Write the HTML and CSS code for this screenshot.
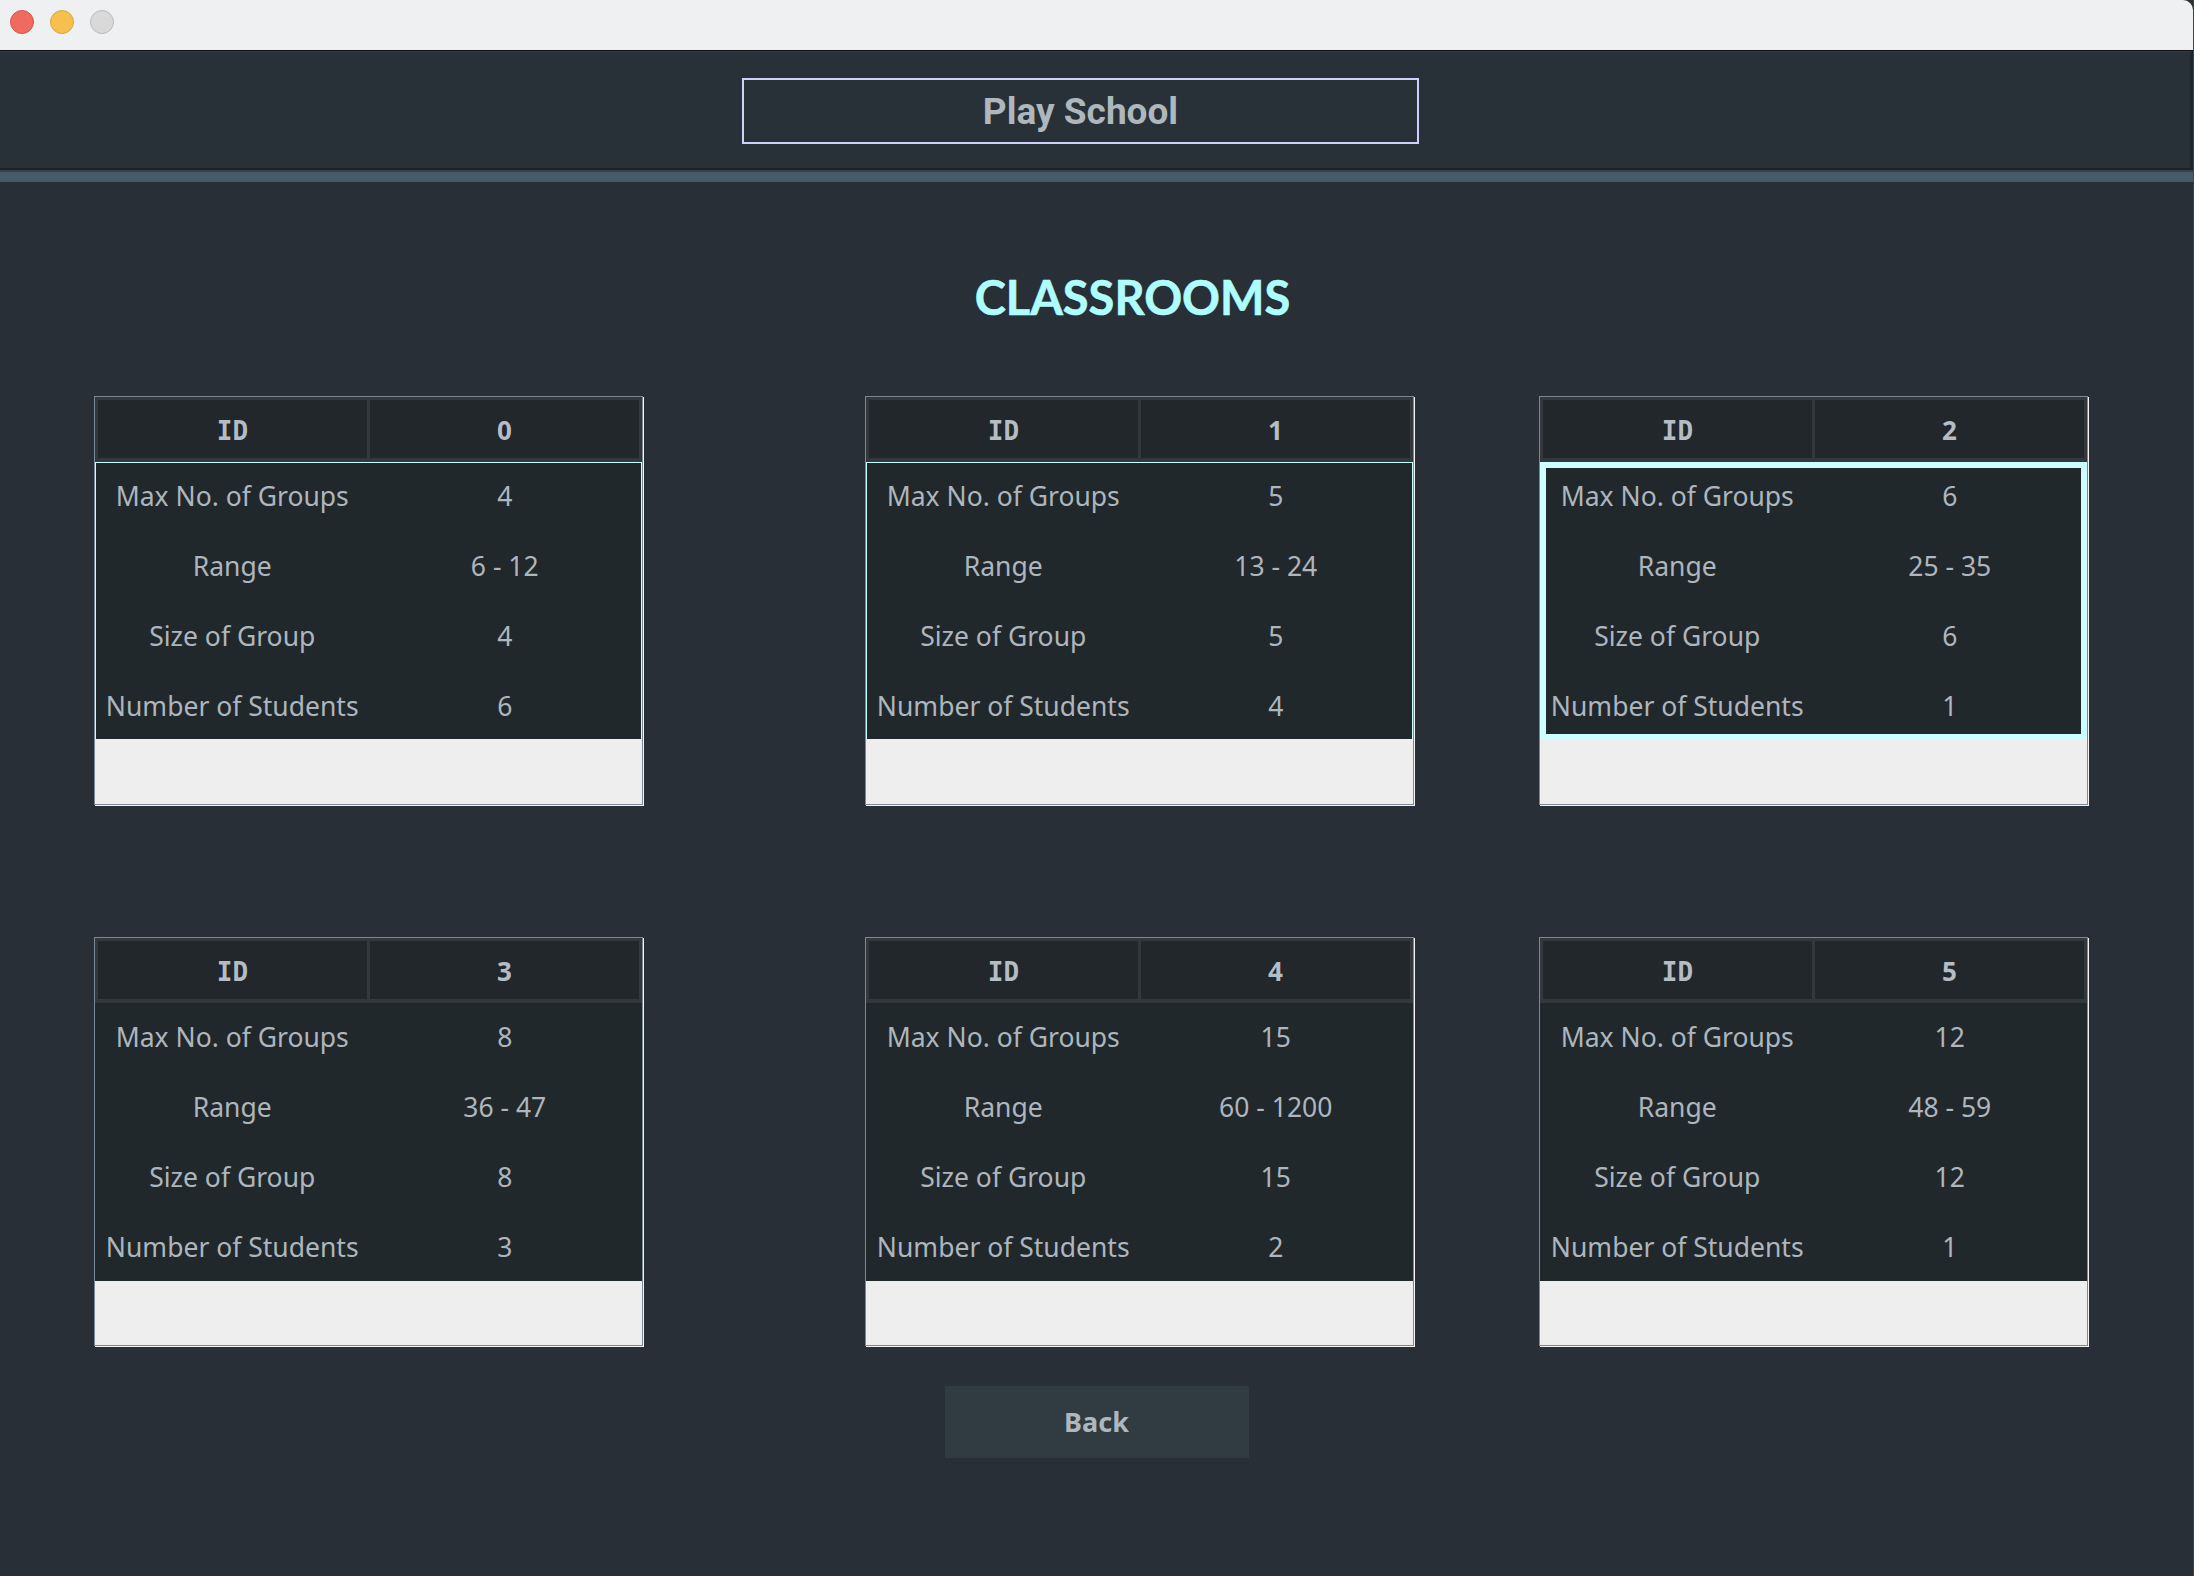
FILE: index.html
```html
<!DOCTYPE html>
<html lang="en">
<head>
<meta charset="utf-8">
<title>Play School</title>
<link rel="stylesheet" href="styles.css">
</head>
<body>
<div class="window">
  <div class="titlebar">
    <span class="light red"></span>
    <span class="light yellow"></span>
    <span class="light grey"></span>
  </div>
  <header class="header">
    <div class="title-box">Play School</div>
  </header>
  <div class="band"></div>
  <main class="main">
    <h1 class="heading">CLASSROOMS</h1>
    <div class="grid">
      <section class="card">
        <div class="card-head"><div class="hcell">ID</div><div class="hcell value">0</div></div>
        <div class="card-body outlined">
          <div class="cell">Max No. of Groups</div><div class="cell">4</div>
          <div class="cell">Range</div><div class="cell">6 - 12</div>
          <div class="cell">Size of Group</div><div class="cell">4</div>
          <div class="cell">Number of Students</div><div class="cell">6</div>
        </div>
        <div class="card-foot"></div>
      </section>
      <section class="card">
        <div class="card-head"><div class="hcell">ID</div><div class="hcell value">1</div></div>
        <div class="card-body outlined">
          <div class="cell">Max No. of Groups</div><div class="cell">5</div>
          <div class="cell">Range</div><div class="cell">13 - 24</div>
          <div class="cell">Size of Group</div><div class="cell">5</div>
          <div class="cell">Number of Students</div><div class="cell">4</div>
        </div>
        <div class="card-foot"></div>
      </section>
      <section class="card">
        <div class="card-head"><div class="hcell">ID</div><div class="hcell value">2</div></div>
        <div class="card-body focused">
          <div class="cell">Max No. of Groups</div><div class="cell">6</div>
          <div class="cell">Range</div><div class="cell">25 - 35</div>
          <div class="cell">Size of Group</div><div class="cell">6</div>
          <div class="cell">Number of Students</div><div class="cell">1</div>
        </div>
        <div class="card-foot"></div>
      </section>
      <section class="card">
        <div class="card-head"><div class="hcell">ID</div><div class="hcell value">3</div></div>
        <div class="card-body">
          <div class="cell">Max No. of Groups</div><div class="cell">8</div>
          <div class="cell">Range</div><div class="cell">36 - 47</div>
          <div class="cell">Size of Group</div><div class="cell">8</div>
          <div class="cell">Number of Students</div><div class="cell">3</div>
        </div>
        <div class="card-foot"></div>
      </section>
      <section class="card">
        <div class="card-head"><div class="hcell">ID</div><div class="hcell value">4</div></div>
        <div class="card-body">
          <div class="cell">Max No. of Groups</div><div class="cell">15</div>
          <div class="cell">Range</div><div class="cell">60 - 1200</div>
          <div class="cell">Size of Group</div><div class="cell">15</div>
          <div class="cell">Number of Students</div><div class="cell">2</div>
        </div>
        <div class="card-foot"></div>
      </section>
      <section class="card">
        <div class="card-head"><div class="hcell">ID</div><div class="hcell value">5</div></div>
        <div class="card-body">
          <div class="cell">Max No. of Groups</div><div class="cell">12</div>
          <div class="cell">Range</div><div class="cell">48 - 59</div>
          <div class="cell">Size of Group</div><div class="cell">12</div>
          <div class="cell">Number of Students</div><div class="cell">1</div>
        </div>
        <div class="card-foot"></div>
      </section>
    </div>
    <button class="back">Back</button>
  </main>
</div>
</body>
</html>
```
FILE: styles.css
```css
* { box-sizing: border-box; }
html, body { margin: 0; padding: 0; }
body {
  background: #282f37;
  font-family: "Noto Sans", "Open Sans", sans-serif;
  width: 2194px;
  height: 1576px;
  overflow: hidden;
}
.window {
  height: 1576px;
  background: #282f37;
  display: flex;
  flex-direction: column;
  border-right: 1px solid #3a444d;
}
.titlebar {
  height: 51px;
  background: #eff0f2;
  border-bottom: 1px solid #0c0e10;
  display: flex;
  align-items: flex-start;
  gap: 16px;
  padding: 10px 0 0 10px;
  border-top-right-radius: 10px;
}
.light {
  width: 24px;
  height: 24px;
  border-radius: 50%;
  border: 1px solid;
}
.red { background: #ef6b60; border-color: #d9534b; }
.yellow { background: #f6c04f; border-color: #d9a63f; }
.grey { background: #d9d9da; border-color: #bdbdbe; }

.header {
  height: 119px;
  background: #283038;
  border-top: 1px solid #343e47;
  border-bottom: 2px solid #1c2228;
  border-right: 3px solid #1e252b;
  padding: 26px 0 0 742px;
}
.title-box {
  width: 677px;
  height: 66px;
  border: 2px solid #cfd0fb;
  display: flex;
  align-items: center;
  justify-content: center;
  font-family: Roboto, "Liberation Sans", sans-serif;
  font-weight: 700;
  font-size: 37px;
  color: #aeb7bc;
}
.band {
  height: 12px;
  border-top: 2px solid #36424b;
  background: #475a67;
}
.main {
  flex: 1;
  padding-top: 92px;
}
.heading {
  margin: 0 0 75px 0;
  padding-left: 72px;
  text-align: center;
  font-family: Lato, "Noto Sans", sans-serif;
  font-weight: 700;
  font-size: 47px;
  line-height: 47px;
  color: #aefefe;
  -webkit-text-stroke: 0.6px #aefefe;
}
.grid {
  display: grid;
  grid-template-columns: 771px 674px 550px;
  grid-auto-rows: 410px;
  row-gap: 131px;
  padding-left: 94px;
}
.card {
  width: 549px;
  height: 409px;
  border: 1px solid #7b8896;
  box-shadow: 1px 1px 0 #f4f4f4;
  display: flex;
  flex-direction: column;
}
.card-head {
  height: 65px;
  background: #32383c;
  padding: 3px 3px 4px 3px;
  display: grid;
  grid-template-columns: 1fr 1fr;
  column-gap: 3px;
}
.hcell {
  background: #21272b;
  display: flex;
  align-items: center;
  justify-content: center;
  font-family: "DejaVu Sans Mono", "Liberation Mono", monospace;
  font-weight: 700;
  font-size: 26px;
  color: #b4bdc4;
  padding-top: 3px;
}
.hcell.value {
  font-family: "Noto Sans", "Open Sans", sans-serif;
  padding-top: 1px;
}
.card-body {
  height: 278px;
  background: #21282c;
  border: 1px solid transparent;
  display: grid;
  grid-template-columns: 1fr 1fr;
  grid-template-rows: repeat(4, 70px);
  align-content: start;
}
.card-body.outlined { border-color: #c8ffff; }
.card-body.focused {
  border-color: #ccffff;
  box-shadow: inset 0 0 0 5px #ccffff;
}
.cell {
  display: flex;
  align-items: center;
  justify-content: center;
  font-size: 26.5px;
  color: #aeb6bd;
  white-space: nowrap;
  padding-bottom: 5px;
}
.card-foot {
  flex: 1;
  background: #eeeeee;
}
.back {
  display: flex;
  align-items: center;
  justify-content: center;
  width: 304px;
  height: 72px;
  margin: 39px auto 0 auto;
  background: #313b42;
  border: none;
  font-family: "Noto Sans", "Open Sans", sans-serif;
  font-weight: 700;
  font-size: 27px;
  color: #aeb7bd;
  padding: 0 0 2px 0;
}
```
